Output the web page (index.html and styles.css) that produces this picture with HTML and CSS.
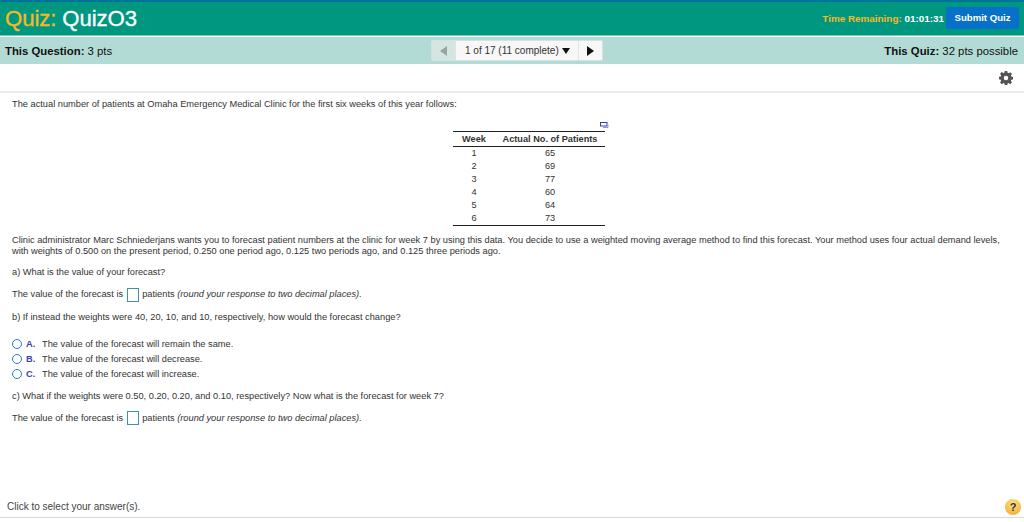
FILE: index.html
```html
<!DOCTYPE html>
<html>
<head>
    <meta charset="UTF-8"/>
    <title>Quiz: Quiz03</title>
    <link rel="stylesheet" href="styles.css">
</head>
<body>
<div class="page">
    <div class="title-bar">
        <h1 class="quiz-title"><span class="gold">Quiz:</span> QuizO3</h1>
        <div class="timer"><span class="gold">Time Remaining:</span> 01:01:31</div>
        <button class="submit-btn">Submit Quiz</button>
    </div>
    <div class="info-bar">
        <div class="info-left"><b>This Question:</b> 3 pts</div>
        <div class="pager">
            <div class="pager-prev"><span class="tri-left"></span></div>
            <div class="pager-mid">1 of 17 (11 complete)<span class="tri-down"></span></div>
            <div class="pager-next"><span class="tri-right"></span></div>
        </div>
        <div class="info-right"><b>This Quiz:</b> 32 pts possible</div>
    </div>
    <div class="tools">
        <svg class="gear" width="14" height="14" viewBox="0 0 16 16">
            <path fill="#555" fill-rule="evenodd" d="M6.6 0h2.8l.4 2.1 1.2.5 1.8-1.2 2 2-1.2 1.8.5 1.2 2.1.4v2.8l-2.1.4-.5 1.2 1.2 1.8-2 2-1.8-1.2-1.2.5-.4 2.1H6.6l-.4-2.1-1.2-.5-1.8 1.2-2-2 1.2-1.8-.5-1.2L-.2 9.4V6.6l2.1-.4.5-1.2-1.2-1.8 2-2 1.8 1.2 1.2-.5zM8 5.4a2.6 2.6 0 1 0 0 5.2 2.6 2.6 0 0 0 0-5.2z"/>
        </svg>
    </div>
    <div class="content">
        <p class="intro">The actual number of patients at Omaha Emergency Medical Clinic for the first six weeks of this year follows:</p>
        <div class="table-wrap">
            <svg class="copy-icon" width="9" height="6" viewBox="0 0 9 6">
                <rect x="0.5" y="0.5" width="6.5" height="3.5" fill="#fff" stroke="#3a3fb0"/>
                <path d="M8 2.5v3H3" fill="none" stroke="#8a9ad0"/>
            </svg>
            <table class="data-table">
                <thead>
                <tr><th class="col-week">Week</th><th>Actual No. of Patients</th></tr>
                </thead>
                <tbody>
                <tr><td>1</td><td>65</td></tr>
                <tr><td>2</td><td>69</td></tr>
                <tr><td>3</td><td>77</td></tr>
                <tr><td>4</td><td>60</td></tr>
                <tr><td>5</td><td>64</td></tr>
                <tr><td>6</td><td>73</td></tr>
                </tbody>
            </table>
        </div>
        <p class="para">Clinic administrator Marc Schniederjans wants you to forecast patient numbers at the clinic for week 7 by using this data. You decide to use a weighted moving average method to find this forecast. Your method uses four actual demand levels, with weights of 0.500 on the present period, 0.250 one period ago, 0.125 two periods ago, and 0.125 three periods ago.</p>
        <p class="q-a">a) What is the value of your forecast?</p>
        <p class="answer">The value of the forecast is <span class="answer-box"></span> patients <i>(round your response to two decimal places).</i></p>
        <p class="q-b">b) If instead the weights were 40, 20, 10, and 10, respectively, how would the forecast change?</p>
        <ul class="options">
            <li><span class="radio"></span><b>A.</b><span>The value of the forecast will remain the same.</span></li>
            <li><span class="radio"></span><b>B.</b><span>The value of the forecast will decrease.</span></li>
            <li><span class="radio"></span><b>C.</b><span>The value of the forecast will increase.</span></li>
        </ul>
        <p class="q-c">c) What if the weights were 0.50, 0.20, 0.20, and 0.10, respectively? Now what is the forecast for week 7?</p>
        <p class="answer">The value of the forecast is <span class="answer-box"></span> patients <i>(round your response to two decimal places).</i></p>
    </div>
    <div class="footer">
        <span class="hint">Click to select your answer(s).</span>
        <span class="help">?</span>
    </div>
</div>
</body>
</html>
```

FILE: styles.css
```css
html, body {
    padding: 0;
    margin: 0;
    overflow: hidden;
    background-color: white;
}

.page {
    width: 1024px;
    height: 522px;
    display: flex;
    flex-direction: column;
    font-family: "Liberation Sans", Arial, sans-serif;
    color: #222;
}

.gold {
    color: #f7b924;
}

.title-bar {
    height: 33px;
    flex: none;
    display: flex;
    align-items: center;
    background-color: #009781;
    border-top: 2px solid #00729a;
    border-bottom: 1px solid #7fcabd;
    padding: 0 5px 0 5px;
}

.quiz-title {
    margin: 0;
    flex: 1;
    font-size: 22.2px;
    font-weight: normal;
    color: white;
    -webkit-text-stroke: 0.3px currentColor;
    letter-spacing: -0.1px;
}

.timer {
    font-size: 9.9px;
    font-weight: bold;
    color: white;
    margin-right: 2px;
}

.submit-btn {
    width: 73px;
    height: 22px;
    border: 0;
    border-radius: 2px;
    background-color: #0770c9;
    color: white;
    font-family: inherit;
    font-size: 9.6px;
    font-weight: bold;
    padding: 0;
    margin-top: -2px;
}

.info-bar {
    height: 27px;
    flex: none;
    display: flex;
    align-items: center;
    background-color: #b2dbd5;
    font-size: 11.35px;
    color: #111;
    padding: 0 6px 0 5px;
    margin-top: 1px;
}

.info-left {
    width: 426px;
}

.info-right {
    margin-left: auto;
}

.pager {
    display: flex;
    height: 21px;
    font-size: 10px;
    color: #333;
    background-color: #f7f7f7;
    border: 1px solid #d5e3e0;
    border-radius: 2px;
    box-sizing: border-box;
    align-items: stretch;
}

.pager-prev {
    width: 23px;
    background-color: #d3e6e2;
    display: flex;
    align-items: center;
    justify-content: center;
}

.pager-mid {
    width: 124px;
    display: flex;
    align-items: center;
    padding-left: 9px;
    box-sizing: border-box;
    border-left: 1px solid #e3e3e3;
    border-right: 1px solid #e3e3e3;
}

.pager-next {
    width: 23px;
    display: flex;
    align-items: center;
    justify-content: center;
}

.tri-left {
    border: solid transparent;
    border-width: 5px 7px 5px 0;
    border-right-color: #9aa5a3;
}

.tri-right {
    border: solid transparent;
    border-width: 5px 0 5px 7px;
    border-left-color: #111;
}

.tri-down {
    border: solid transparent;
    border-width: 6px 4.5px 0 4.5px;
    border-top-color: #111;
    margin-left: 3px;
}

.tools {
    height: 27px;
    flex: none;
    display: flex;
    justify-content: flex-end;
    align-items: center;
    padding-right: 11px;
    border-bottom: 2px solid #ebebf0;
}

.content {
    flex: 1;
    font-size: 9.25px;
    padding: 0 12px;
    color: #333;
}

.content p {
    margin: 0;
}

.intro {
    padding-top: 6px;
    line-height: 11px;
}

.table-wrap {
    width: 156px;
    margin: 12px 0 0 441px;
    display: flex;
    flex-direction: column;
}

.copy-icon {
    display: block;
    align-self: flex-end;
    margin-bottom: 3px;
}

.data-table {
    width: 152px;
    border-collapse: collapse;
    border-top: 1px solid #222;
    border-bottom: 1px solid #222;
    font-size: 9.2px;
}

.data-table th {
    height: 14px;
    padding: 0;
    border-bottom: 1px solid #222;
    font-weight: bold;
}

.data-table td {
    height: 12px;
    padding: 0 0 1px 0;
    text-align: center;
}

.col-week {
    width: 42px;
}

.para,
.q-a,
.q-b,
.q-c {
    line-height: 11px;
}

.content .para {
    margin-top: 9px;
}

.content .q-a {
    margin-top: 10px;
}

.content .answer {
    margin-top: 9px;
    line-height: 14px;
}

.content .q-b {
    margin-top: 10px;
}

.content .q-c {
    margin-top: 9px;
}

.answer-box {
    display: inline-block;
    width: 10px;
    height: 12px;
    border: 1px solid #3d94a8;
    vertical-align: middle;
    margin: 0 1px;
}

.options {
    list-style: none;
    margin: 14px 0 0 0;
    padding: 0;
}

.options li {
    display: flex;
    align-items: center;
    height: 15px;
}

.options b {
    color: #3d3fa8;
    width: 16px;
    margin-left: 4px;
}

.radio {
    width: 8px;
    height: 8px;
    border: 1px solid #2f78c4;
    border-radius: 50%;
    background-color: white;
    flex: none;
}

.footer {
    height: 27px;
    flex: none;
    display: flex;
    align-items: center;
    justify-content: space-between;
    border-bottom: 1px solid #d8d8e0;
    padding: 5px 3px 0 7px;
    box-sizing: border-box;
    margin-bottom: 4px;
}

.hint {
    font-size: 10px;
    color: #444;
}

.help {
    width: 16px;
    height: 16px;
    border-radius: 50%;
    background: radial-gradient(circle at 50% 30%, #fde08a, #f5a623);
    color: #333;
    font-size: 11px;
    font-weight: bold;
    text-align: center;
    line-height: 16px;
}
```
